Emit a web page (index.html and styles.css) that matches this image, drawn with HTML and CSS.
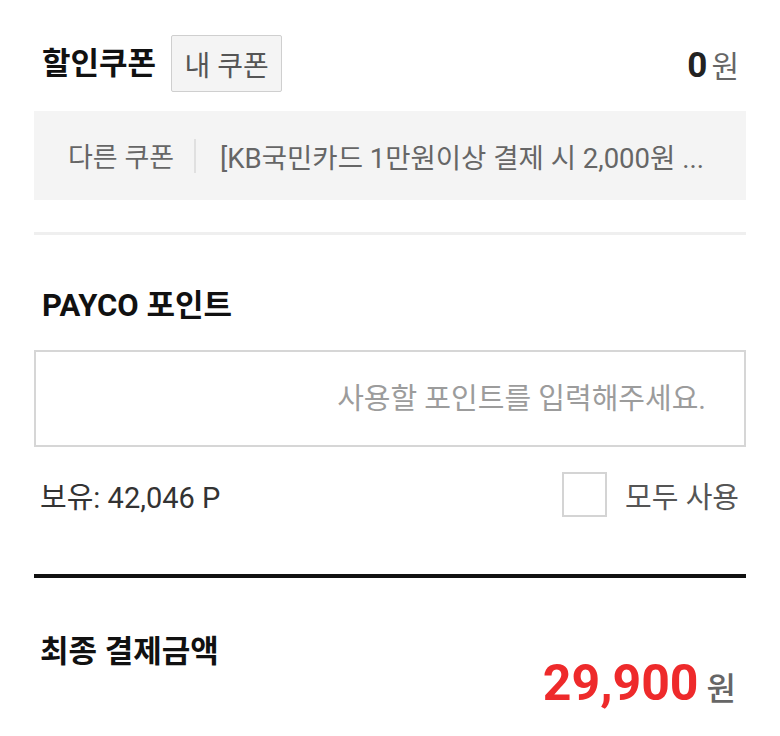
FILE: index.html
```
<!DOCTYPE html>
<html lang="ko">
<head>
  <meta charset="UTF-8">
  <title>결제 할인</title>
  <link rel="stylesheet" href="styles.css">
</head>
<body>

<div class="pay-wrap">

  <section class="coupon">
    <div class="sec-head">
      <h3 class="sec-title">할인쿠폰</h3>
      <button class="btn-my">내 쿠폰</button>
      <div class="price"><strong>0</strong><span class="won">원</span></div>
    </div>
    <div class="coupon-other">
      <span class="label">다른 쿠폰</span>
      <span class="bar"></span>
      <span class="coupon-name">[KB국민카드 1만원이상 결제 시 2,000원 ...</span>
    </div>
  </section>

  <section class="point">
    <h3 class="sec-title">PAYCO 포인트</h3>
    <input class="point-input" type="text" placeholder="사용할 포인트를 입력해주세요.">
    <div class="point-info">
      <span class="have">보유: 42,046 P</span>
      <label class="use-all">
        <span class="check"></span>
        모두 사용
      </label>
    </div>
  </section>

  <section class="total">
    <h3 class="sec-title">최종 결제금액</h3>
    <div class="total-price"><strong>29,900</strong><span class="won">원</span></div>
  </section>

</div>

</body>
</html>
```

FILE: styles.css
```
body {
  margin: 0;
  background: #fff;
  font-family: Roboto, "Noto Sans CJK KR", sans-serif;
  color: #222;
}
.pay-wrap {
  padding: 35px 34px 0;
}
.sec-title {
  margin: 0;
  font-size: 31px;
  font-weight: 700;
  line-height: 40px;
  color: #111;
}

/* 할인쿠폰 */
.sec-head {
  display: flex;
  align-items: center;
  height: 57px;
  padding: 0 7px 0 8px;
}
.btn-my {
  margin-left: 15px;
  width: 111px;
  height: 57px;
  padding: 0;
  background: #f4f4f4;
  border: 1px solid #cfcfcf;
  border-radius: 2px;
  font-family: inherit;
  font-size: 28px;
  color: #555;
}
.price {
  margin-left: auto;
  display: flex;
  align-items: baseline;
}
.price strong {
  font-size: 35px;
  font-weight: 700;
  color: #222;
}
.won {
  margin-left: 4px;
  font-size: 30px;
  color: #666;
}
.coupon-other {
  display: flex;
  align-items: center;
  margin-top: 19px;
  height: 89px;
  padding: 0 34px 0 34px;
  background: #f4f4f4;
  font-size: 27.5px;
  color: #666;
  white-space: nowrap;
}
.coupon-other .label {
  font-size: 27px;
}
.coupon-other .bar {
  flex: none;
  width: 2px;
  height: 34px;
  margin: 0 24px 0 20px;
  background: #e0e0e0;
}
.coupon-other .coupon-name {
  overflow: hidden;
  text-overflow: ellipsis;
}
.coupon {
  padding-bottom: 32px;
  border-bottom: 3px solid #efefef;
}

/* PAYCO 포인트 */
.point {
  padding-top: 51px;
}
.point .sec-title {
  padding-left: 8px;
}
.point-input {
  display: block;
  box-sizing: border-box;
  width: 100%;
  height: 97px;
  margin-top: 24px;
  padding: 0 38px;
  border: 2px solid #d6d6d6;
  border-radius: 0;
  text-align: right;
  font-family: inherit;
  font-size: 29px;
  color: #222;
  outline: none;
}
.point-input::placeholder {
  color: #9c9c9c;
}
.point-info {
  display: flex;
  align-items: center;
  justify-content: space-between;
  margin-top: 25px;
  padding: 0 7px 0 6px;
  height: 45px;
}
.have {
  font-size: 29px;
  color: #333;
}
.use-all {
  display: flex;
  align-items: center;
  font-size: 29px;
  color: #555;
}
.check {
  box-sizing: border-box;
  width: 45px;
  height: 45px;
  margin-right: 18px;
  border: 2px solid #d4d4d4;
  background: #fff;
}

/* 최종 결제금액 */
.total {
  margin-top: 57px;
  border-top: 4px solid #111;
  border-bottom: 2px solid #eee;
  padding: 54px 10px 20px 6px;
  display: flex;
  justify-content: space-between;
  align-items: flex-start;
}
.total-price {
  display: flex;
  align-items: baseline;
  margin-top: 21px;
  line-height: 60px;
}
.total-price strong {
  font-size: 50px;
  font-weight: 700;
  color: #ee2a2b;
}
.total-price .won {
  margin-left: 8px;
  font-size: 32px;
  font-weight: 500;
  color: #666;
}
```
